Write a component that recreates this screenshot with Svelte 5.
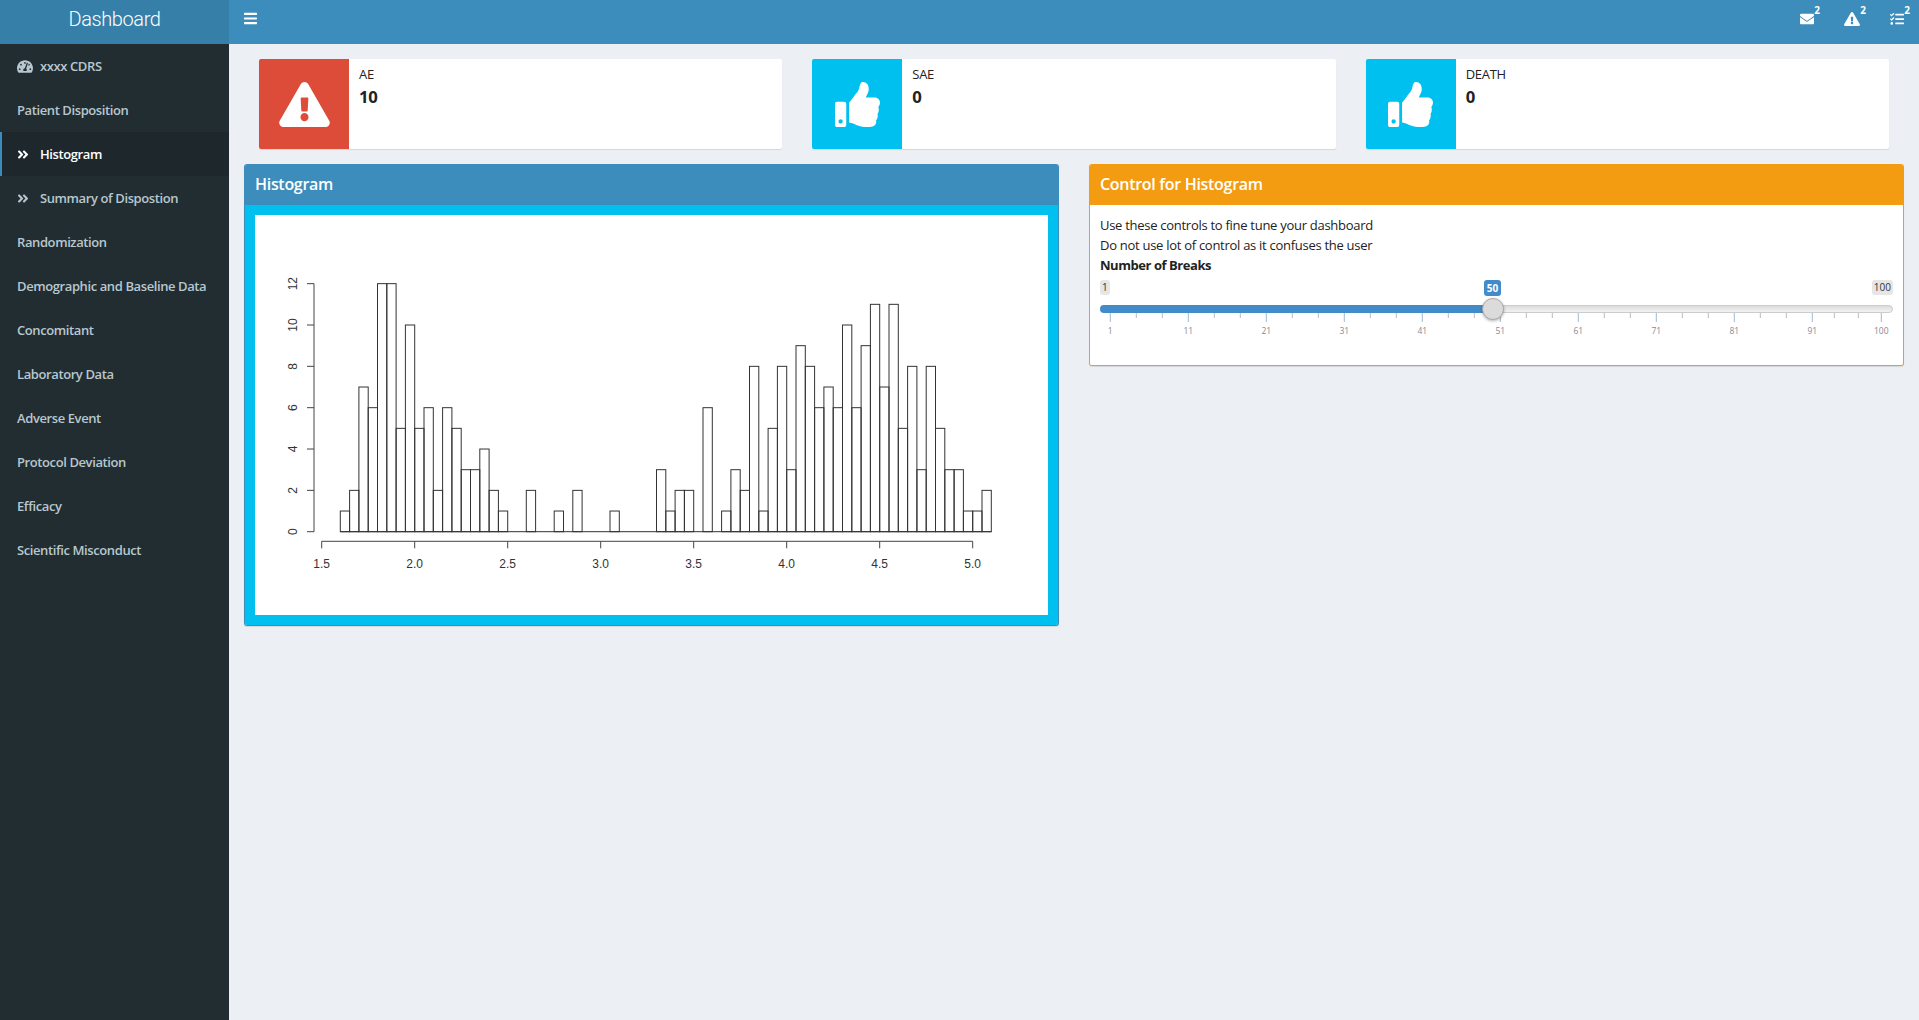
<script lang="ts">
  const menu = [
    { label: 'xxxx CDRS', icon: 'gauge' },
    { label: 'Patient Disposition' },
    { label: 'Histogram', icon: 'angles', active: true },
    { label: 'Summary of Dispostion', icon: 'angles' },
    { label: 'Randomization' },
    { label: 'Demographic and Baseline Data' },
    { label: 'Concomitant' },
    { label: 'Laboratory Data' },
    { label: 'Adverse Event' },
    { label: 'Protocol Deviation' },
    { label: 'Efficacy' },
    { label: 'Scientific Misconduct' },
  ];

  const infoBoxes = [
    { title: 'AE', value: '10', tone: 'red', icon: 'warning' },
    { title: 'SAE', value: '0', tone: 'cyan', icon: 'thumb' },
    { title: 'DEATH', value: '0', tone: 'cyan', icon: 'thumb' },
  ];

  // histogram counts, one per 0.05 bin starting at 1.6
  const counts = [
    1, 2, 7, 6, 12, 12, 5, 10, 5, 6, 2, 6, 5, 3, 3, 4, 2, 1, 0, 0, 2, 0, 0, 1, 0, 2, 0, 0, 0, 1, 0, 0, 0, 0,
    3, 1, 2, 2, 0, 6, 0, 1, 3, 2, 8, 1, 5, 8, 3, 9, 8, 6, 7, 6, 10, 6, 9, 11, 7, 11, 5, 8, 3, 8, 5, 3, 3, 1, 1, 2,
  ];
  const px = (v: number) => 66.7 + (v - 1.5) * 186;
  const py = (n: number) => 316.7 - n * 20.67;
  const xTicks = [1.5, 2, 2.5, 3, 3.5, 4, 4.5, 5];
  const yTicks = [0, 2, 4, 6, 8, 10, 12];

  const sliderLabels = [1, 11, 21, 31, 41, 51, 61, 71, 81, 91];
  const minorTicks = [
    ...sliderLabels.flatMap((_, i) => [10.3 + 78 * i + 26, 10.3 + 78 * i + 52]).slice(0, 18),
    734.3,
    758.3,
  ];
  const iconPaths = {
    warning:
      'M569.517 440.013C587.975 472.007 564.806 512 527.94 512H48.054c-36.937 0-59.999-40.055-41.577-71.987L246.423 23.985c18.467-32.009 64.72-31.951 83.154 0l239.94 416.028zM288 354c-25.405 0-46 20.595-46 46s20.595 46 46 46 46-20.595 46-46-20.595-46-46-46zm-43.673-165.346l7.418 136c.347 6.364 5.609 11.346 11.982 11.346h48.546c6.373 0 11.635-4.982 11.982-11.346l7.418-136c.375-6.874-5.098-12.654-11.982-12.654h-63.383c-6.884 0-12.356 5.78-11.981 12.654z',
    thumb:
      'M104 224H24c-13.255 0-24 10.745-24 24v240c0 13.255 10.745 24 24 24h80c13.255 0 24-10.745 24-24V248c0-13.255-10.745-24-24-24zM64 472c-13.255 0-24-10.745-24-24s10.745-24 24-24 24 10.745 24 24-10.745 24-24 24zM384 81.452c0 42.416-25.97 66.208-33.277 94.548h101.723c33.397 0 59.397 27.746 59.553 58.098.084 17.938-7.546 37.249-19.439 49.197l-.11.11c9.836 23.337 8.237 56.037-9.308 79.469 8.681 25.895-.069 57.704-16.382 74.757 4.298 17.598 2.244 32.575-6.148 44.632C440.202 511.587 389.616 512 346.839 512l-2.845-.001c-48.287-.017-87.806-17.598-119.56-31.725-15.957-7.099-36.821-15.887-52.651-16.178-6.54-.12-11.783-5.457-11.783-11.998v-213.77c0-3.2 1.282-6.271 3.558-8.521 39.614-39.144 56.648-80.587 89.117-113.111 14.804-14.832 20.188-37.236 25.393-58.902C282.515 39.293 291.817 0 312 0c24 0 72 8 72 81.452z',
    envelope:
      'M502.3 190.8c3.9-3.1 9.7-.2 9.7 4.7V400c0 26.5-21.5 48-48 48H48c-26.5 0-48-21.5-48-48V195.6c0-5 5.7-7.8 9.7-4.7 22.4 17.4 52.1 39.5 154.1 113.6 21.1 15.4 56.7 47.8 92.2 47.6 35.7.3 72-32.8 92.3-47.6 102-74.1 131.6-96.3 154-113.7zM256 320c23.2.4 56.6-29.2 73.4-41.4 132.7-96.3 142.8-104.7 173.4-128.7 5.8-4.5 9.2-11.5 9.2-18.9v-19c0-26.5-21.5-48-48-48H48C21.5 64 0 85.5 0 112v19c0 7.4 3.4 14.3 9.2 18.9 30.6 23.9 40.7 32.4 173.4 128.7 16.8 12.2 50.2 41.8 73.4 41.4z',
    tasks:
      'M139.61 35.5a12 12 0 0 0-17 0L58.93 98.81l-22.7-22.12a12 12 0 0 0-17 0L3.53 92.41a12 12 0 0 0 0 17l47.59 47.4a12.78 12.78 0 0 0 17.61 0l15.59-15.62L156.52 69a12.09 12.09 0 0 0 .09-17zm0 159.19a12 12 0 0 0-17 0l-63.68 63.72-22.7-22.1a12 12 0 0 0-17 0L3.53 252a12 12 0 0 0 0 17L51 316.5a12.77 12.77 0 0 0 17.6 0l15.7-15.69 72.2-72.22a12 12 0 0 0 .09-16.9zM64 368c-26.49 0-48.59 21.5-48.59 48S37.53 464 64 464a48 48 0 0 0 0-96zm432 16H208a16 16 0 0 0-16 16v32a16 16 0 0 0 16 16h288a16 16 0 0 0 16-16v-32a16 16 0 0 0-16-16zm0-320H208a16 16 0 0 0-16 16v32a16 16 0 0 0 16 16h288a16 16 0 0 0 16-16V80a16 16 0 0 0-16-16zm0 160H208a16 16 0 0 0-16 16v32a16 16 0 0 0 16 16h288a16 16 0 0 0 16-16v-32a16 16 0 0 0-16-16z',
    bars:
      'M16 132h416c8.837 0 16-7.163 16-16V76c0-8.837-7.163-16-16-16H16C7.163 60 0 67.163 0 76v40c0 8.837 7.163 16 16 16zm0 160h416c8.837 0 16-7.163 16-16v-40c0-8.837-7.163-16-16-16H16c-8.837 0-16 7.163-16 16v40c0 8.837 7.163 16 16 16zm0 160h416c8.837 0 16-7.163 16-16v-40c0-8.837-7.163-16-16-16H16c-8.837 0-16 7.163-16 16v40c0 8.837 7.163 16 16 16z',
    angles:
      'M224.3 273l-136 136c-9.4 9.4-24.6 9.4-33.9 0l-22.6-22.6c-9.4-9.4-9.4-24.6 0-33.9l96.4-96.4-96.4-96.4c-9.4-9.4-9.4-24.6 0-33.9L54.3 103c9.4-9.4 24.6-9.4 33.9 0l136 136c9.5 9.4 9.5 24.6.1 34zm192-34l-136-136c-9.4-9.4-24.6-9.4-33.9 0l-22.6 22.6c-9.4 9.4-9.4 24.6 0 33.9l96.4 96.4-96.4 96.4c-9.4 9.4-9.4 24.6 0 33.9l22.6 22.6c9.4 9.4 24.6 9.4 33.9 0l136-136c9.4-9.2 9.4-24.4 0-33.8z',
    gauge:
      'M288 32C128.94 32 0 160.94 0 320c0 52.8 14.25 102.26 39.06 144.8 5.61 9.62 16.3 15.2 27.44 15.2h443c11.14 0 21.83-5.58 27.44-15.2C561.75 422.26 576 372.8 576 320c0-159.06-128.94-288-288-288zm0 64c14.71 0 26.58 10.13 30.32 23.65-1.11 2.26-2.64 4.23-3.45 6.67l-9.22 27.67c-5.13 3.49-10.97 6.01-17.64 6.01-17.67 0-32-14.33-32-32S270.33 96 288 96zM96 384c-17.67 0-32-14.33-32-32s14.33-32 32-32 32 14.33 32 32-14.33 32-32 32zm48-160c-17.67 0-32-14.33-32-32s14.33-32 32-32 32 14.33 32 32-14.33 32-32 32zm246.77-72.41l-61.33 184C343.13 347.33 352 364.54 352 384c0 11.72-3.38 22.55-8.88 32H232.88c-5.5-9.45-8.88-20.28-8.88-32 0-33.94 26.5-61.43 59.9-63.59l61.34-184.01c4.17-12.56 17.73-19.45 30.36-15.17 12.57 4.19 19.35 17.79 15.17 30.36zm14.66 57.2l15.52-46.55c3.47-1.29 7.13-2.23 11.05-2.23 17.67 0 32 14.33 32 32s-14.33 32-32 32c-11.38-.01-20.89-6.28-26.57-15.22zM480 384c-17.67 0-32-14.33-32-32s14.33-32 32-32 32 14.33 32 32-14.33 32-32 32z',
  };
  const viewBoxes = {
    warning: '0 0 576 512',
    thumb: '0 0 512 512',
    envelope: '0 0 512 512',
    tasks: '0 0 512 512',
    bars: '0 0 448 512',
    angles: '0 0 448 512',
    gauge: '0 0 576 512',
  };
  const navIcons = ['envelope', 'warning', 'tasks'];
</script>

{#snippet icon(name, cls)}
  <svg class={cls} viewBox={viewBoxes[name]} aria-hidden="true"><path fill="currentColor" d={iconPaths[name]} /></svg>
{/snippet}

<div class="app">
  <header class="topbar">
    <div class="logo">Dashboard</div>
    <nav class="navbar">
      <button class="toggle" type="button" aria-label="Toggle navigation">
        {@render icon('bars', 'bars-icon')}
      </button>
      <div class="nav-menus">
        {#each navIcons as name}
          <div class="nav-item">
            {@render icon(name, `nav-icon nav-${name}`)}
            <span class="badge">2</span>
          </div>
        {/each}
      </div>
    </nav>
  </header>

  <div class="body">
    <aside class="sidebar">
      {#each menu as item}
        <a class="menu-item" class:active={item.active} href="#top">
          {#if item.icon}
            <span class="menu-icon">{@render icon(item.icon, `mi-${item.icon}`)}</span>
          {/if}
          <span>{item.label}</span>
        </a>
      {/each}
    </aside>

    <main class="content">
      <div class="info-row">
        {#each infoBoxes as box}
          <div class="info-box">
            <div class="info-icon {box.tone}">{@render icon(box.icon, `big-${box.icon}`)}</div>
            <div class="info-text">
              <span class="info-title">{box.title}</span>
              <span class="info-number">{box.value}</span>
            </div>
          </div>
        {/each}
      </div>

      <div class="panels">
        <section class="panel primary">
          <h3 class="panel-title">Histogram</h3>
          <div class="plot-body">
            <svg class="plot" viewBox="0 0 793 400" aria-label="Histogram">
              <g class="bars">
                <line x1={px(1.6)} x2={px(5.1)} y1={py(0)} y2={py(0)} />
                {#each counts as n, i}
                  {#if n > 0}
                    <rect
                      x={px(1.6 + i * 0.05)}
                      y={py(n)}
                      width={186 * 0.05}
                      height={n * 20.67}
                    />
                  {/if}
                {/each}
              </g>
              <g class="axis">
                <line x1={px(1.5)} x2={px(5)} y1="326.3" y2="326.3" />
                {#each xTicks as t}
                  <line x1={px(t)} x2={px(t)} y1="326.3" y2="333.3" />
                  <text x={px(t)} y="353.4" text-anchor="middle">{t.toFixed(1)}</text>
                {/each}
                <line x1="59" x2="59" y1={py(0)} y2={py(12)} />
                {#each yTicks as t}
                  <line x1="52" x2="59" y1={py(t)} y2={py(t)} />
                  <text
                    x="0"
                    y="0"
                    text-anchor="middle"
                    transform="translate(42 {py(t)}) rotate(-90)">{t}</text>
                {/each}
              </g>
            </svg>
          </div>
        </section>

        <section class="panel warning">
          <h3 class="panel-title">Control for Histogram</h3>
          <div class="control-body">
            <p>Use these controls to fine tune your dashboard</p>
            <p>Do not use lot of control as it confuses the user</p>
            <p class="strong">Number of Breaks</p>

            <div class="slider">
              <div class="edge-labels">
                <span class="edge">1</span>
                <span class="edge">100</span>
              </div>
              <span class="current">50</span>
              <div class="track">
                <div class="track-fill"></div>
              </div>
              <span class="handle"></span>
              <svg class="grid" viewBox="0 0 793 42" aria-hidden="true">
                {#each minorTicks as x}
                  <line class="minor" x1={x} x2={x} y1="0" y2="5" />
                {/each}
                {#each sliderLabels as label, i}
                  <line class="major" x1={10.3 + 78 * i} x2={10.3 + 78 * i} y1="0" y2="9" />
                  <text x={10.3 + 78 * i} y="21" text-anchor="middle">{label}</text>
                {/each}
                <line class="major" x1="781.3" x2="781.3" y1="0" y2="9" />
                <text x="781.3" y="21" text-anchor="middle">100</text>
              </svg>
            </div>
          </div>
        </section>
      </div>
    </main>
  </div>
</div>

<style>
  :global(body) {
    margin: 0;
    background: #ecf0f5;
    font-family: 'Open Sans', 'Noto Sans', sans-serif;
    font-size: 13px;
    letter-spacing: -0.28px;
    color: #333;
  }

  .app {
    display: flex;
    flex-direction: column;
    min-height: 100vh;
  }

  .topbar {
    display: flex;
    height: 44px;
    flex-shrink: 0;
  }

  .logo {
    width: 229px;
    box-sizing: border-box;
    padding-bottom: 6px;
    display: flex;
    align-items: center;
    justify-content: center;
    background: #367fa9;
    color: #fff;
    font-family: 'Roboto', 'Liberation Sans', sans-serif;
    font-size: 20px;
    font-weight: 300;
    letter-spacing: -0.4px;
  }

  .navbar {
    flex: 1;
    display: flex;
    align-items: center;
    justify-content: space-between;
    background: #3c8dbc;
    padding: 0 15px 7px 15px;
  }

  .toggle {
    display: flex;
    padding: 0;
    border: 0;
    background: none;
    color: #fff;
  }

  .bars-icon {
    width: 13px;
    height: 15px;
  }

  .nav-menus {
    display: flex;
    gap: 30px;
  }

  .nav-item {
    position: relative;
    display: flex;
    color: #fff;
  }

  .nav-icon {
    width: 14px;
    height: 14px;
  }

  .nav-icon.nav-warning {
    width: 16px;
  }

  .badge {
    position: absolute;
    top: -8px;
    right: -6px;
    font-size: 10px;
    font-weight: 700;
    letter-spacing: 0;
    line-height: 12px;
  }

  .body {
    flex: 1;
    display: flex;
  }

  .sidebar {
    width: 229px;
    flex-shrink: 0;
    background: #222d32;
  }

  .menu-item {
    display: flex;
    align-items: center;
    height: 44px;
    padding-left: 17px;
    color: #b8c7ce;
    font-weight: 600;
    letter-spacing: -0.4px;
    text-decoration: none;
    box-sizing: border-box;
  }

  .menu-item.active {
    background: #1e282c;
    border-left: 2px solid #3c8dbc;
    padding-left: 15px;
    color: #fff;
  }

  .menu-icon {
    display: flex;
    width: 23px;
    flex-shrink: 0;
  }

  .mi-angles {
    width: 12px;
    height: 13px;
  }

  .mi-gauge {
    width: 16px;
    height: 15px;
  }

  .content {
    flex: 1;
    min-width: 0;
    padding: 15px;
  }

  .info-row {
    display: grid;
    grid-template-columns: repeat(3, 1fr);
    gap: 30px;
    padding: 0 15px;
    margin-bottom: 15px;
  }

  .info-box {
    display: flex;
    height: 90px;
    background: #fff;
    border-radius: 2px;
    box-shadow: 0 1px 1px rgba(0, 0, 0, 0.1);
    overflow: hidden;
  }

  .info-icon {
    width: 90px;
    display: flex;
    align-items: center;
    justify-content: center;
    color: #fff;
  }

  .info-icon.red {
    background: #dd4b39;
  }

  .info-icon.cyan {
    background: #00c0ef;
  }

  .big-warning {
    width: 51px;
    height: 45px;
  }

  .big-thumb {
    width: 45px;
    height: 45px;
  }

  .info-text {
    padding: 5px 10px;
    display: flex;
    flex-direction: column;
  }

  .info-title {
    line-height: 20px;
    color: #222;
  }

  .info-number {
    font-size: 16.7px;
    font-weight: 700;
    line-height: 26px;
    color: #222;
  }

  .panels {
    display: grid;
    grid-template-columns: 1fr 1fr;
    gap: 30px;
    align-items: start;
  }

  .panel {
    border-radius: 3px;
    box-shadow: 0 1px 1px rgba(0, 0, 0, 0.1);
    overflow: hidden;
    box-sizing: border-box;
    border: 1px solid;
    border-top: 0;
  }

  .panel.primary {
    border-color: #3c8dbc;
  }

  .panel.warning {
    border-color: #f39c12;
  }

  .panel-title {
    margin: 0 -1px;
    height: 41px;
    box-sizing: border-box;
    padding: 0 0 2px 11px;
    display: flex;
    align-items: center;
    color: #fff;
    font-size: 16px;
    font-weight: 600;
    letter-spacing: -0.3px;
  }

  .primary .panel-title {
    background: #3c8dbc;
  }

  .warning .panel-title {
    background: #f39c12;
  }

  .plot-body {
    padding: 10px;
    background: #00c0ef;
  }

  .plot {
    display: block;
    width: 100%;
    height: 400px;
    background: #fff;
  }

  .bars rect {
    fill: none;
    stroke: #333;
    stroke-width: 1;
  }

  .bars line {
    stroke: #333;
    stroke-width: 1;
  }

  .axis line {
    stroke: #444;
    stroke-width: 1;
  }

  .axis text {
    font-family: 'Liberation Sans', sans-serif;
    font-size: 12px;
    letter-spacing: 0;
    fill: #333;
  }

  .control-body {
    padding: 10px;
    background: #fff;
  }

  .control-body p {
    margin: 0;
    line-height: 20px;
    color: #222;
  }

  .control-body p.strong {
    font-weight: 700;
    letter-spacing: -0.45px;
  }

  .slider {
    position: relative;
    margin-top: 5px;
    margin-bottom: 0;
  }

  .edge-labels {
    display: flex;
    justify-content: space-between;
    margin-bottom: 10px;
    height: 15px;
  }

  .edge {
    padding: 0 2px;
    background: #e6e6e6;
    border-radius: 3px;
    font-size: 10px;
    letter-spacing: 0;
    line-height: 15px;
    color: #333;
  }

  .current {
    position: absolute;
    top: 0;
    left: 384px;
    width: 17px;
    height: 16px;
    background: #428bca;
    border-radius: 3px;
    color: #fff;
    font-size: 10px;
    font-weight: 700;
    letter-spacing: 0;
    line-height: 16px;
    text-align: center;
  }

  .track {
    height: 8px;
    box-sizing: border-box;
    background: linear-gradient(#ddd, #f2f2f2);
    border: 1px solid #ccc;
    border-radius: 4px;
    position: relative;
  }

  .track-fill {
    position: absolute;
    left: -1px;
    top: -1px;
    bottom: -1px;
    width: 394px;
    background: #428bca;
    border-radius: 4px 0 0 4px;
  }

  .handle {
    position: absolute;
    top: 18px;
    left: 382px;
    width: 22px;
    height: 22px;
    box-sizing: border-box;
    background: #dbdbdb;
    border: 1px solid #aaa;
    border-radius: 50%;
    box-shadow: 0 1px 3px rgba(0, 0, 0, 0.3);
  }

  .grid {
    display: block;
    width: 100%;
    height: 42px;
  }

  .grid .major {
    stroke: #9dbbd6;
  }

  .grid .minor {
    stroke: #bbb;
  }

  .grid text {
    font-size: 8.5px;
    letter-spacing: 0;
    fill: #889;
  }
</style>
